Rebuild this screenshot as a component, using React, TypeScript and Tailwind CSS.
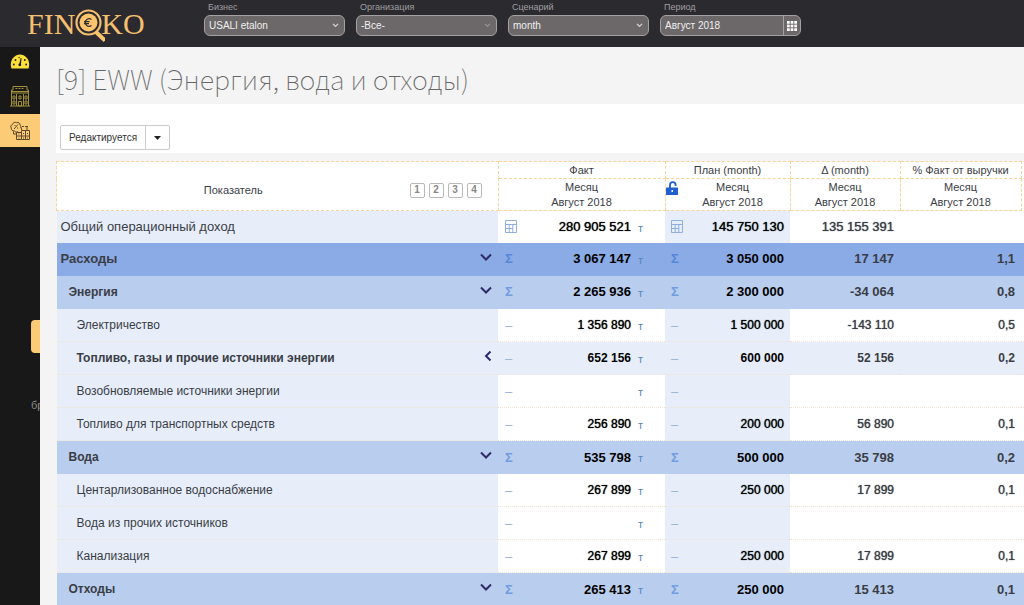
import { useState } from "react";
import type { ReactNode } from "react";

type RowKind = "total" | "group" | "subgroup" | "item" | "itemBold";

interface Row {
  name: string;
  kind: RowKind;
  fact?: string;
  plan?: string;
  delta?: string;
  percent?: string;
}

const rows: Row[] = [
  { name: "Общий операционный доход", kind: "total", fact: "280 905 521", plan: "145 750 130", delta: "135 155 391" },
  { name: "Расходы", kind: "group", fact: "3 067 147", plan: "3 050 000", delta: "17 147", percent: "1,1" },
  { name: "Энергия", kind: "subgroup", fact: "2 265 936", plan: "2 300 000", delta: "-34 064", percent: "0,8" },
  { name: "Электричество", kind: "item", fact: "1 356 890", plan: "1 500 000", delta: "-143 110", percent: "0,5" },
  { name: "Топливо, газы и прочие источники энергии", kind: "itemBold", fact: "652 156", plan: "600 000", delta: "52 156", percent: "0,2" },
  { name: "Возобновляемые источники энергии", kind: "item" },
  { name: "Топливо для транспортных средств", kind: "item", fact: "256 890", plan: "200 000", delta: "56 890", percent: "0,1" },
  { name: "Вода", kind: "subgroup", fact: "535 798", plan: "500 000", delta: "35 798", percent: "0,2" },
  { name: "Центарлизованное водоснабжение", kind: "item", fact: "267 899", plan: "250 000", delta: "17 899", percent: "0,1" },
  { name: "Вода из прочих источников", kind: "item" },
  { name: "Канализация", kind: "item", fact: "267 899", plan: "250 000", delta: "17 899", percent: "0,1" },
  { name: "Отходы", kind: "subgroup", fact: "265 413", plan: "250 000", delta: "15 413", percent: "0,1" },
];

// фон строки целиком
const rowStyle: Record<RowKind, string> = {
  total: "h-8 bg-white",
  group: "h-[33px] bg-[#8aabe5]",
  subgroup: "h-[33px] bg-[#b9cdee]",
  item: "h-[33px] bg-white border-b border-dotted border-[#efe3d6]",
  itemBold: "h-[33px] bg-[#e7edf9] border-b border-dotted border-[#efe3d6]",
};

const nameStyle: Record<RowKind, string> = {
  total: "pl-1 text-[13px]",
  group: "pl-1 text-[13px] font-bold",
  subgroup: "pl-3 text-xs font-bold",
  item: "pl-5 text-xs",
  itemBold: "pl-5 text-xs font-bold",
};

const valueStyle: Record<RowKind, string> = {
  total: "text-[13px] [text-shadow:0_0_1px_currentColor]",
  group: "text-[13px] font-bold",
  subgroup: "text-[13px] font-bold",
  item: "text-xs [text-shadow:0_0_1px_currentColor]",
  itemBold: "text-xs font-bold",
};

function Logo() {
  return (
    <a href="#" aria-label="FINOKO" className="flex h-full items-center font-['Liberation_Serif',serif] text-[30px] leading-none text-[#f3bf70]">
      <span>FIN</span>
      <svg width="30" height="36" viewBox="0 0 30 36" fill="none" className="mt-1 -mr-1">
        <circle cx="13.500" cy="14.500" r="12" stroke="#f3bf70" strokeWidth="2.200" />
        <circle cx="13.500" cy="14.500" r="9" fill="#fbc46d" />
        <path d="M16.500 11.500a3.800 3.800 0 1 0 0 6M9 13.700h5.500M9 15.600h5" stroke="#2b2a2f" strokeWidth="1.200" />
        <path d="M21 24l9 8.500" stroke="#fbc46d" strokeWidth="4" />
      </svg>
      <span>KO</span>
    </a>
  );
}

function Chevron({ className = "" }: { className?: string }) {
  return (
    <svg width="7" height="5" viewBox="0 0 8 6" fill="none" stroke="currentColor" strokeWidth="1.500" className={className}>
      <path d="M1 1l3 3 3-3" />
    </svg>
  );
}

interface FilterProps {
  id: string;
  label: string;
  children: ReactNode;
}

function Filter({ id, label, children }: FilterProps) {
  return (
    <div className="w-[141px]">
      <label htmlFor={id} className="block h-[15px] pl-1 text-[9px] leading-[15px] text-[#a09fa1]">
        {label}
      </label>
      {children}
    </div>
  );
}

function FilterSelect({ id, label, option, muted }: { id: string; label: string; option: string; muted?: boolean }) {
  return (
    <Filter id={id} label={label}>
      <div className="relative">
        <select
          id={id}
          className="block h-[21px] w-full appearance-none rounded-md border border-[#a3a1a2] bg-[#6c6869] px-1 text-[10px] text-[#f0f0f0]"
        >
          <option>{option}</option>
        </select>
        <Chevron className={`pointer-events-none absolute top-2 right-1.5 ${muted ? "text-[#969394]" : "text-[#d5d5d5]"}`} />
      </div>
    </Filter>
  );
}

function Header() {
  return (
    <header className="flex h-[47px] shrink-0 bg-[#2b2a2f]">
      <div className="w-[204px] shrink-0 pl-[27px]">
        <Logo />
      </div>
      <div className="flex gap-[11px]">
        <FilterSelect id="business" label="Бизнес" option="USALI etalon" />
        <FilterSelect id="org" label="Организация" option="-Все-" muted />
        <FilterSelect id="scenario" label="Сценарий" option="month" />
        <Filter id="period" label="Период">
          <div className="flex h-[21px] overflow-hidden rounded-md border border-[#a3a1a2] bg-[#6c6869]">
            <input id="period" defaultValue="Август 2018" className="min-w-0 grow px-1 text-[10px] text-[#f0f0f0]" />
            <button type="button" aria-label="Выбрать период" className="flex w-5 items-center justify-center border-l border-[#a3a1a2]">
              <svg width="10" height="10" viewBox="0 0 11 11" fill="#fff">
                {[0, 4, 8].map((y) => [0, 4, 8].map((x) => <rect key={`${x}-${y}`} x={x} y={y} width="3" height="3" />))}
              </svg>
            </button>
          </div>
        </Filter>
      </div>
    </header>
  );
}

function GaugeIcon() {
  return (
    <svg width="20" height="16" viewBox="0 0 20 16">
      <path d="M1.500 14.500C-1 7 4 .5 10 .5S21 7 18.500 14.500z" fill="#fbe03a" />
      <g fill="#181818">
        <circle cx="3.800" cy="10.500" r="0.900" />
        <circle cx="5.500" cy="6" r="0.900" />
        <circle cx="9" cy="3.500" r="0.700" />
        <circle cx="14.800" cy="6" r="0.900" />
        <circle cx="16.200" cy="10.500" r="0.900" />
        <circle cx="9.800" cy="10.800" r="1.400" />
        <path d="M9.200 10.500l1.400-6.500 1 .2-.8 6.800z" />
      </g>
    </svg>
  );
}

function BuildingIcon() {
  return (
    <svg width="20" height="22" viewBox="0 0 20 22" fill="none" stroke="#a3913a">
      <path d="M3 1.500h14v3.500h1.500v3h-17V5H3zM1.500 6.500h17M1.500 8v13M18.500 8v13M0 21h20M6.500 9v12M13.500 9v12" />
      <path d="M3 11h2v3H3zM9 11h2v3H9zM15 11h2v3h-2zM3 16h2v3H3zM15 16h2v3h-2zM8.500 16.500h3V21h-3z" />
      <path d="M5.500 3.500h9" strokeDasharray="2 1" />
    </svg>
  );
}

function CostsIcon() {
  return (
    <svg width="20" height="20" viewBox="0 0 20 20" fill="none" stroke="#5e4a2b">
      <path d="M8 10.500c-1.500 1.200-3 .6-3.300-.6C2.500 10.200.8 8.800 1.300 7 .2 5.600 1 3.800 2.500 3.500 3 1.500 5 .8 6.500 1.700 8.500.8 10.200 2.200 10 4c1.200 1 1 2.500 0 3.200" />
      <path d="M4 8l4-4.500M4.500 4.500h1M7 7h1M3.500 10.500V13h3M12 5.500h2M15 5.500h3M11.500 9V6.500M17 6v3.500" />
      <path d="M6.500 11.500h5v7h-5zM11.500 9.500h8v9h-8zM6.500 15h13M15.500 9.500v9M8.500 13h1M8.500 17h1M13 12.500h1M17 12.500h1M13 17h1M17 17h1" />
    </svg>
  );
}

function Sidebar() {
  return (
    <nav className="flex w-10 shrink-0 flex-col overflow-hidden bg-[#181818]">
      <a href="#" aria-label="Показатели" className="flex h-[30px] items-center justify-center">
        <GaugeIcon />
      </a>
      <a href="#" aria-label="Организации" className="flex h-[37px] items-center justify-center">
        <BuildingIcon />
      </a>
      <a href="#" aria-label="Расходы" className="flex h-[33px] items-center justify-center bg-[#fccb76]">
        <CostsIcon />
      </a>
      <div className="mt-[173px] ml-[31px] h-[33px] rounded-l bg-[#fccb76]" />
      <span className="mt-11 ml-[31px] text-[11px] leading-4 text-[#8b8b8b]">бр</span>
    </nav>
  );
}

function CalcIcon() {
  return (
    <svg width="12" height="13" viewBox="0 0 12 13" fill="none" stroke="#8fb0dc">
      <path d="M.5.5h11v12H.5zM.5 4.500h11M.5 8.500h7.500M4.200 5v7.500M7.800 5v7.500" />
    </svg>
  );
}

function Marker({ kind }: { kind: RowKind }) {
  if (kind === "total") return <CalcIcon />;
  if (kind === "group" || kind === "subgroup") {
    return <span className={`text-[13px] font-bold ${kind === "group" ? "text-[#5688d8]" : "text-[#6f9de0]"}`}>Σ</span>;
  }
  return <span className="pt-0.5 text-[13px] text-[#9bb4dc]">–</span>;
}

function Toggle({ kind }: { kind: RowKind }) {
  if (kind === "total" || kind === "item") return null;
  const closed = kind === "itemBold";
  return (
    <button type="button" aria-label={closed ? "Развернуть" : "Свернуть"} className="mr-1.5 mb-1">
      <svg width="12" height="10" viewBox="0 0 12 10" fill="none" stroke="#2f2a66" strokeWidth="2">
        <path d={closed ? "M10.500 0.500L6 5l4.500 4.500" : "M1 2.500l5 5 5-5"} />
      </svg>
    </button>
  );
}

const headCell = "border border-dashed border-[#f5d79c] font-normal";

function PeriodCell({ lock }: { lock?: boolean }) {
  return (
    <th className={`${headCell} relative h-8 leading-[15px] ${lock ? "pl-2.5" : ""}`}>
      {lock && (
        <svg width="12" height="14" viewBox="0 0 12 14" fill="none" className="absolute top-0.5 left-0">
          <path d="M0 6.500h12V14H0z" fill="#1f5fd0" />
          <path d="M4 7V4a2.800 2.800 0 0 1 5.600 0v1" stroke="#1f5fd0" strokeWidth="1.800" />
          <path d="M5.500 9h1.500v2H5.500z" fill="#fff" />
        </svg>
      )}
      Месяц
      <br />
      Август 2018
    </th>
  );
}

function ReportTable() {
  const [level, setLevel] = useState<number | null>(null);

  return (
    <table className="w-full table-fixed border-collapse text-[#3a3d45]">
      <colgroup>
        <col />
        <col className="w-[167px]" />
        <col className="w-[125px]" />
        <col className="w-[110px]" />
        <col className="w-[121px]" />
        <col className="w-[3px]" />
      </colgroup>
      <thead className="bg-white text-[11px]">
        <tr>
          <th rowSpan={2} className={headCell}>
            <div className="flex items-center pt-2 pr-4">
              <span className="grow">Показатель</span>
              <div className="flex gap-1">
                {[1, 2, 3, 4].map((n) => (
                  <button
                    key={n}
                    type="button"
                    aria-pressed={level === n}
                    onClick={() => setLevel(n)}
                    className="h-[15px] w-[15px] rounded-xs border border-[#b9b9b9] text-[10px] leading-none font-bold text-[#888]"
                  >
                    {n}
                  </button>
                ))}
              </div>
            </div>
          </th>
          <th className={`${headCell} h-[17px] leading-4`}>Факт</th>
          <th className={`${headCell} leading-4`}>План (month)</th>
          <th className={`${headCell} leading-4`}>Δ (month)</th>
          <th className={`${headCell} leading-4`}>% Факт от выручки</th>
          <td rowSpan={2} />
        </tr>
        <tr>
          <PeriodCell />
          <PeriodCell lock />
          <PeriodCell />
          <PeriodCell />
        </tr>
      </thead>
      <tbody>
        {rows.map((row) => {
          const tinted = row.kind === "item" || row.kind === "total" ? "bg-[#e7eefa]" : "";
          const value = valueStyle[row.kind];
          return (
            <tr key={row.name} className={rowStyle[row.kind]}>
              <th scope="row" className={`p-0 text-left font-normal ${tinted}`}>
                <div className="flex items-center">
                  <span className={`grow ${nameStyle[row.kind]}`}>{row.name}</span>
                  <Toggle kind={row.kind} />
                </div>
              </th>
              <td className="p-0">
                <div className="flex items-center pr-5 pl-[7px]">
                  <Marker kind={row.kind} />
                  <span className={`grow text-right text-black ${value}`}>{row.fact}</span>
                  <span className="w-3.5 pt-0.5 pl-[7px] text-[11px] text-[#5586bd]">т</span>
                </div>
              </td>
              <td className={`p-0 ${tinted}`}>
                <div className="flex items-center pr-1.5 pl-1.5">
                  <Marker kind={row.kind} />
                  <span className={`grow text-right text-black ${value}`}>{row.plan}</span>
                </div>
              </td>
              <td className={`p-0 pr-1.5 text-right ${value}`}>{row.delta}</td>
              <td className={`p-0 pr-1.5 text-right ${value}`}>{row.percent}</td>
              <td />
            </tr>
          );
        })}
      </tbody>
    </table>
  );
}

export default function App() {
  return (
    <div className="flex h-screen flex-col overflow-hidden bg-[#f4f4f4] font-['Liberation_Sans',Arial,sans-serif]">
      <Header />
      <div className="flex min-h-0 grow">
        <Sidebar />
        <main className="min-w-0 grow pl-4">
          <h1 className="h-[57px] pt-3 font-['Noto_Sans_CJK_SC',sans-serif] text-[27px] leading-10 font-thin text-[#666]">
            [9] EWW (Энергия, вода и отходы)
          </h1>
          <div className="mb-2 bg-white pt-[21px] pb-[3px] pl-1">
            <div className="inline-flex h-[25px] rounded-xs border border-[#ccc] align-top text-[10px] text-[#333]">
              <button type="button" className="px-2">
                Редактируется
              </button>
              <button type="button" aria-label="Ещё" className="flex w-6 items-center justify-center border-l border-[#ccc]">
                <svg width="7" height="4" viewBox="0 0 7 4">
                  <path d="M0 0h7L3.500 4z" fill="#222" />
                </svg>
              </button>
            </div>
          </div>
          <ReportTable />
        </main>
      </div>
    </div>
  );
}
